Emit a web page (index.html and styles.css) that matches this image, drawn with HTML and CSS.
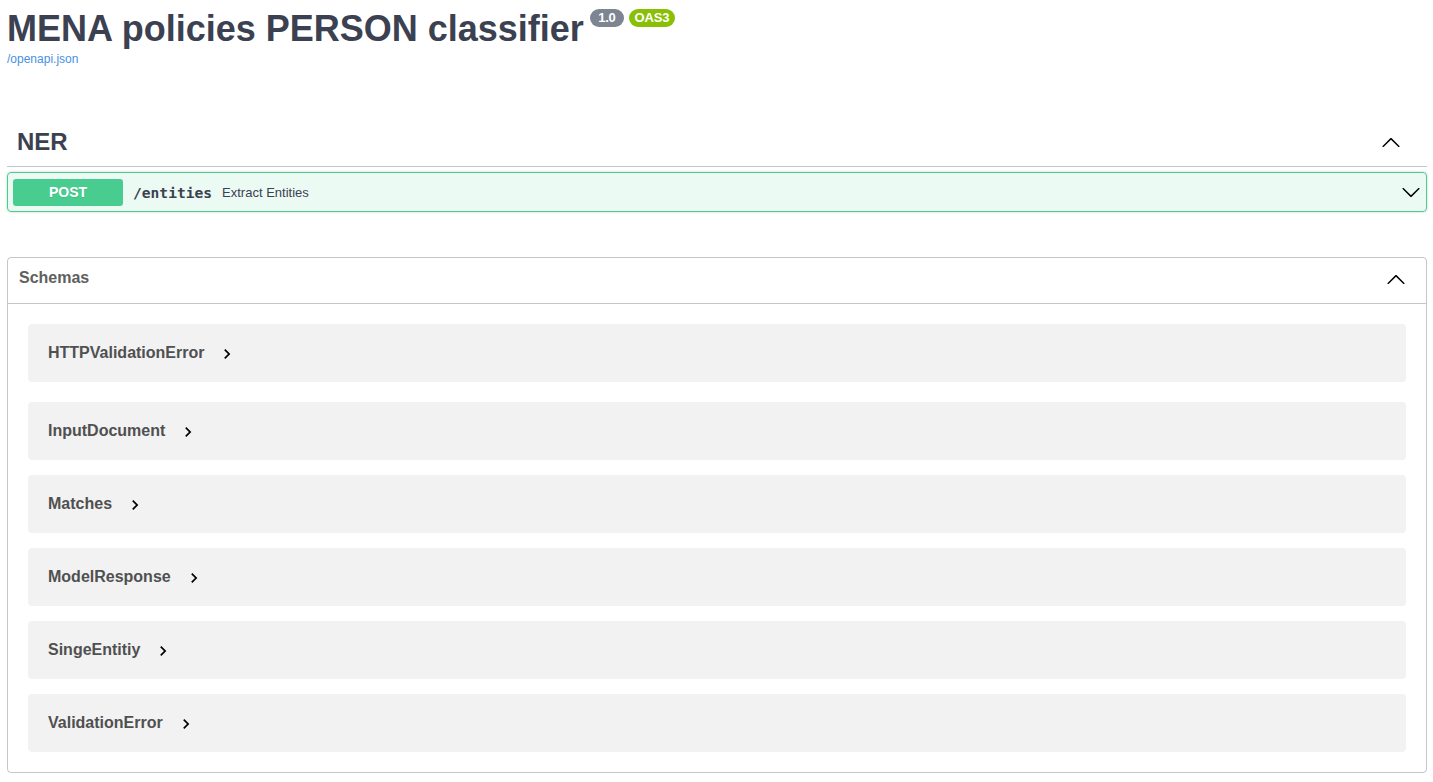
FILE: index.html
```html
<!DOCTYPE html>
<html lang="en">
<head>
<meta charset="utf-8">
<title>MENA policies PERSON classifier</title>
<link rel="stylesheet" href="styles.css">
</head>
<body>
<div class="wrapper">
  <div class="info">
    <div class="title-row">
      <h2 class="title">MENA policies PERSON classifier</h2>
      <span class="badge badge-version">1.0</span>
      <span class="badge badge-oas">OAS3</span>
    </div>
    <a class="spec-link" href="#">/openapi.json</a>
  </div>

  <section class="tag-section">
    <h3 class="opblock-tag">
      <span class="tag-name">NER</span>
      <button class="expand-operation" type="button">
        <svg class="arrow" width="20" height="20" viewBox="0 0 20 20"><path d="M17.418 14.908c.272.268.709.268.979 0s.271-.701 0-.969l-7.908-7.83c-.27-.268-.707-.268-.979 0l-7.908 7.83c-.27.268-.27.701 0 .969.271.268.709.268.979 0L10 7.767l7.418 7.141z"/></svg>
      </button>
    </h3>
    <div class="opblock opblock-post">
      <div class="opblock-summary">
        <span class="method">POST</span>
        <span class="path">/entities</span>
        <span class="summary-desc">Extract Entities</span>
        <svg class="arrow arrow-right" width="20" height="20" viewBox="0 0 20 20"><path d="M17.418 6.109c.272-.268.709-.268.979 0s.271.701 0 .969l-7.908 7.83c-.27.268-.707.268-.979 0l-7.908-7.830c-.27-.268-.27-.701 0-.969.271-.268.709-.268.979 0L10 13.25l7.418-7.141z"/></svg>
      </div>
    </div>
  </section>

  <section class="models">
    <h4 class="models-head">
      <span class="models-title">Schemas</span>
      <svg class="arrow models-arrow" width="20" height="20" viewBox="0 0 20 20"><path d="M17.418 14.908c.272.268.709.268.979 0s.271-.701 0-.969l-7.908-7.83c-.27-.268-.707-.268-.979 0l-7.908 7.83c-.27.268-.27.701 0 .969.271.268.709.268.979 0L10 7.767l7.418 7.141z"/></svg>
    </h4>
    <div class="model-list">
      <div class="model-container first"><span class="model-title">HTTPValidationError</span><svg class="toggle" width="20" height="20" viewBox="0 0 24 24"><path d="M10 6 8.59 7.41 13.17 12l-4.58 4.59L10 18l6-6z"/></svg></div>
      <div class="model-container"><span class="model-title">InputDocument</span><svg class="toggle" width="20" height="20" viewBox="0 0 24 24"><path d="M10 6 8.59 7.41 13.17 12l-4.58 4.59L10 18l6-6z"/></svg></div>
      <div class="model-container"><span class="model-title">Matches</span><svg class="toggle" width="20" height="20" viewBox="0 0 24 24"><path d="M10 6 8.59 7.41 13.17 12l-4.58 4.59L10 18l6-6z"/></svg></div>
      <div class="model-container"><span class="model-title">ModelResponse</span><svg class="toggle" width="20" height="20" viewBox="0 0 24 24"><path d="M10 6 8.59 7.41 13.17 12l-4.58 4.59L10 18l6-6z"/></svg></div>
      <div class="model-container"><span class="model-title">SingeEntitiy</span><svg class="toggle" width="20" height="20" viewBox="0 0 24 24"><path d="M10 6 8.59 7.41 13.17 12l-4.58 4.59L10 18l6-6z"/></svg></div>
      <div class="model-container last"><span class="model-title">ValidationError</span><svg class="toggle" width="20" height="20" viewBox="0 0 24 24"><path d="M10 6 8.59 7.41 13.17 12l-4.58 4.59L10 18l6-6z"/></svg></div>
    </div>
  </section>
</div>
</body>
</html>
```

FILE: styles.css
```css
* { box-sizing: border-box; }

html, body {
  margin: 0;
  padding: 0;
  background: #fff;
  font-family: "Liberation Sans", Arial, sans-serif;
  color: #3b4151;
}

.wrapper {
  padding: 0 6px 0 7px;
}

/* ---------- info ---------- */
.info {
  padding-top: 8px;
  margin-bottom: 52px;
}

.title-row {
  display: flex;
  align-items: flex-start;
}

.title {
  margin: 0;
  font-size: 36px;
  font-weight: 700;
  line-height: 41px;
  color: #3b4151;
}

.badge {
  margin-top: 1px;
  height: 18px;
  line-height: 18px;
  padding: 0 5px;
  border-radius: 57px;
  font-size: 13px;
  font-weight: 700;
  color: #fff;
  text-align: center;
  letter-spacing: -0.2px;
}

.badge-version {
  margin-left: 6px;
  min-width: 34px;
  background: #7d8492;
}

.badge-oas {
  margin-left: 5px;
  min-width: 46px;
  background: #89bf04;
}

.spec-link {
  display: inline-block;
  margin-top: 3px;
  font-size: 12px;
  line-height: 14px;
  color: #4990e2;
  text-decoration: none;
}

/* ---------- tag ---------- */
.opblock-tag {
  display: flex;
  align-items: center;
  margin: 0 0 5px;
  padding: 10px 20px 10px 10px;
  height: 48px;
  border-bottom: 1px solid rgba(59, 65, 81, 0.3);
  font-size: 24px;
  font-weight: 700;
  color: #3b4151;
}

.tag-name {
  flex: 1;
  padding-bottom: 2px;
}

.expand-operation {
  display: flex;
  border: none;
  background: none;
  padding: 0 6px;
  margin: 0 0 2px;
}

.arrow {
  display: block;
  fill: #000;
}

/* ---------- operation ---------- */
.opblock {
  border-radius: 4px;
  box-shadow: 0 0 3px rgba(0, 0, 0, 0.19);
}

.opblock-post {
  background: rgba(73, 204, 144, 0.1);
  border: 1px solid #49cc90;
}

.opblock-summary {
  display: flex;
  align-items: center;
  padding: 5px;
  height: 38px;
}

.method {
  width: 110px;
  height: 27px;
  line-height: 27px;
  background: #49cc90;
  border-radius: 3px;
  color: #fff;
  font-size: 14px;
  font-weight: 700;
  text-align: center;
  text-shadow: 0 1px 0 rgba(0, 0, 0, 0.1);
}

.path {
  padding: 0 10px;
  font-family: "DejaVu Sans Mono", "Liberation Mono", monospace;
  font-size: 14.6px;
  font-weight: 700;
  color: #3b4151;
}

.summary-desc {
  flex: 1;
  font-size: 13px;
  color: #3b4151;
}

/* ---------- models ---------- */
.models {
  margin-top: 45px;
  border: 1px solid rgba(59, 65, 81, 0.3);
  border-radius: 4px;
  padding-bottom: 20px;
}

.models-head {
  display: flex;
  align-items: center;
  margin: 0;
  height: 46px;
  padding: 0 20px 0 10px;
  border-bottom: 1px solid rgba(59, 65, 81, 0.3);
  font-size: 16px;
  font-weight: 700;
  color: #606060;
}

.models-title {
  flex: 1;
  padding-bottom: 6px;
  padding-left: 1px;
}

.models-arrow {
  margin-bottom: 4px;
}

.model-list {
  display: flex;
  flex-direction: column;
}

.model-container {
  display: flex;
  align-items: center;
  height: 58px;
  margin: 0 20px 15px;
  padding-left: 20px;
  background: rgba(0, 0, 0, 0.05);
  border-radius: 4px;
}

.model-container.first {
  margin: 20px 20px 20px;
}

.model-container.last {
  margin-bottom: 0;
}

.model-title {
  font-size: 16px;
  font-weight: 700;
  color: #505050;
  padding-bottom: 1px;
}

.toggle {
  display: block;
  margin-left: 13px;
  margin-top: 2px;
  fill: #000;
}
```
